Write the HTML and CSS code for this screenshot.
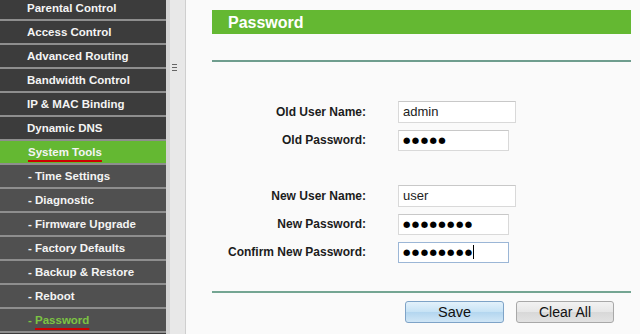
FILE: index.html
```html
<!DOCTYPE html>
<html>
<head>
<meta charset="utf-8">
<link rel="stylesheet" href="styles.css">
</head>
<body>
<div class="page">
  <nav class="sidebar">
    <div class="item">Parental Control</div>
    <div class="item">Access Control</div>
    <div class="item">Advanced Routing</div>
    <div class="item">Bandwidth Control</div>
    <div class="item">IP &amp; MAC Binding</div>
    <div class="item">Dynamic DNS</div>
    <div class="item active"><span class="mark">System Tools</span></div>
    <div class="item sub">- Time Settings</div>
    <div class="item sub">- Diagnostic</div>
    <div class="item sub">- Firmware Upgrade</div>
    <div class="item sub">- Factory Defaults</div>
    <div class="item sub">- Backup &amp; Restore</div>
    <div class="item sub">- Reboot</div>
    <div class="item sub current">- <span class="mark">Password</span></div>
  </nav>
  <div class="splitter"><div class="grip"><i></i><i></i><i></i></div></div>
  <main class="main">
    <h1 class="title">Password</h1>
    <hr class="rule">
    <div class="form">
      <label>Old User Name:</label><div class="field wide">admin</div>
      <label>Old Password:</label><div class="field dots">●●●●●</div>
      <div class="spacer"></div>
      <label>New User Name:</label><div class="field wide">user</div>
      <label>New Password:</label><div class="field dots">●●●●●●●●</div>
      <label>Confirm New Password:</label><div class="field dots focus">●●●●●●●●<span class="caret"></span></div>
    </div>
    <hr class="rule bottom">
    <div class="buttons">
      <button class="btn save">Save</button>
      <button class="btn clear">Clear All</button>
    </div>
  </main>
</div>
</body>
</html>
```

FILE: styles.css
```css
html, body {
  margin: 0;
  padding: 0;
  height: 100%;
  overflow: hidden;
}
body {
  font-family: "Liberation Sans", Arial, sans-serif;
  background: #f9f9f9;
}
.page {
  display: flex;
  height: 334px;
}
.sidebar {
  width: 166px;
  flex: none;
  background: #3c3c3c;
  margin-top: -3px;
  overflow: hidden;
}
.item {
  height: 22px;
  line-height: 22px;
  border-bottom: 2px solid #8e8e8e;
  padding-left: 27px;
  color: #f4f4f4;
  font-weight: bold;
  font-size: 11.5px;
  background: #3c3c3c;
  white-space: nowrap;
}
.item.sub {
  background: #505050;
  padding-left: 28px;
}
.item.active {
  background: #64b832;
  padding-left: 28px;
}
.item.current {
  color: #7cc443;
}
.mark {
  text-decoration: underline;
  text-decoration-color: #cc0000;
  text-decoration-thickness: 2px;
  text-underline-offset: 4px;
}
.splitter {
  width: 15px;
  flex: none;
  border-left: 4px solid #d4d4d4;
  border-right: 1px solid #cfcfcf;
  background: #e8e8e8;
  position: relative;
}
.grip {
  display: flex;
  flex-direction: column;
  gap: 2px;
  padding: 64px 0 0 2px;
}
.grip i {
  display: block;
  width: 5px;
  height: 1px;
  background: #666;
}
.main {
  flex: 1;
  padding: 10px 9px 0 26px;
  background: #fafafa;
}
.title {
  margin: 0;
  height: 24px;
  line-height: 25px;
  background: #64b832;
  color: #fff;
  font-size: 16px;
  font-weight: bold;
  padding-left: 16px;
}
.rule {
  margin: 26px 0 0;
  border: 0;
  height: 2px;
  background: #6f9d8e;
}
.form {
  display: grid;
  grid-template-columns: 154px 1fr;
  column-gap: 32px;
  grid-auto-rows: 28px;
  align-items: center;
  margin-top: 36px;
}
.form label {
  text-align: right;
  font-weight: bold;
  font-size: 12px;
  color: #1c1c1c;
}
.spacer {
  grid-column: 1 / span 2;
  height: 29px;
}
.form .spacer { align-self: start; }
.field {
  box-sizing: border-box;
  height: 21px;
  width: 111px;
  border: 1px solid #d9d9d9;
  border-top-color: #c8c8c8;
  background: #fff;
  font-size: 13px;
  line-height: 19px;
  padding-left: 4px;
  color: #222;
  white-space: nowrap;
}
.field.wide {
  width: 118px;
  height: 22px;
}
.field.dots {
  font-family: "DejaVu Sans", sans-serif;
  font-size: 8.5px;
  letter-spacing: 1.4px;
  color: #000;
}
.field.focus {
  border-color: #9bb6d6;
}
.caret {
  display: inline-block;
  width: 1px;
  height: 14px;
  background: #000;
  vertical-align: middle;
  margin-left: -1px;
}
.rule.bottom {
  margin-top: 25px;
  background: #74a592;
}
.buttons {
  display: flex;
  gap: 12px;
  padding-left: 193px;
  margin-top: 8px;
}
.btn {
  height: 22px;
  width: 99px;
  font-family: "Liberation Sans", Arial, sans-serif;
  font-size: 14.5px;
  color: #111;
  border-radius: 3px;
  padding: 0;
  line-height: 18px;
}
.btn.save {
  border: 1px solid #7ea3c7;
  background: linear-gradient(#e3f1fb, #c6e2f5 50%, #b3d6ef 51%, #d0e6f6);
}
.btn.clear {
  width: 98px;
  font-size: 14px;
  border: 1px solid #a8a8a8;
  background: linear-gradient(#f2f2f2, #e6e6e6 50%, #d8d8d8 51%, #e2e2e2);
}
```
